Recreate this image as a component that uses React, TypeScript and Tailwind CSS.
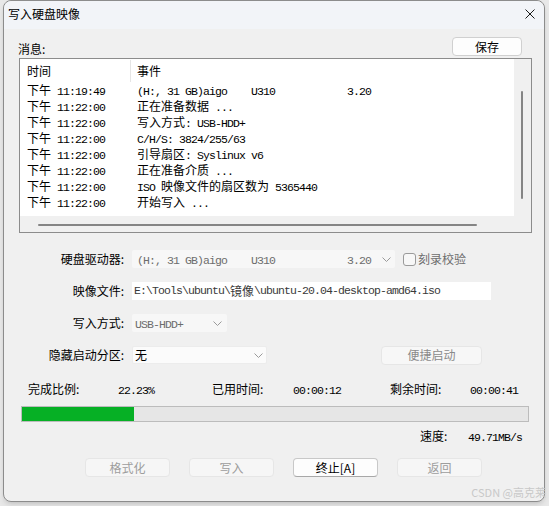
import React from "react";

const CJK = /([\u2e80-\u9fff\u3000-\u303f\uff00-\uffef]+)/;

function Mixed({ text }: { text: string }) {
  return (
    <>
      {text.split(CJK).map((part, i) =>
        part === "" ? null : CJK.test(part) ? (
          <span key={i} className="font-['Noto_Sans_CJK_SC'] text-[12px] tracking-normal">
            {part}
          </span>
        ) : (
          <span key={i} className="font-['Liberation_Mono'] text-[11.5px] tracking-[-0.9px]">
            {part}
          </span>
        )
      )}
    </>
  );
}

const rows = [
  ["下午 11:19:49", "(H:, 31 GB)aigo    U310            3.20"],
  ["下午 11:22:00", "正在准备数据 ..."],
  ["下午 11:22:00", "写入方式: USB-HDD+"],
  ["下午 11:22:00", "C/H/S: 3824/255/63"],
  ["下午 11:22:00", "引导扇区: Syslinux v6"],
  ["下午 11:22:00", "正在准备介质 ..."],
  ["下午 11:22:00", "ISO 映像文件的扇区数为 5365440"],
  ["下午 11:22:00", "开始写入 ..."],
];

function Chevron() {
  return (
    <svg width="9" height="5" viewBox="0 0 9 5" className="shrink-0">
      <polyline points="0.5,0.5 4.5,4.5 8.5,0.5" fill="none" stroke="#9a9a9a" strokeWidth="1" />
    </svg>
  );
}

function FieldLabel({ children }: { children: React.ReactNode }) {
  return <div className="w-[105px] shrink-0 text-right text-[12px] leading-[18px] text-black">{children}</div>;
}

const percent = 22.23;

export default function App() {
  return (
    <div className="relative h-[506px] w-[549px] overflow-hidden bg-[#e8e8e8] font-['Noto_Sans_CJK_SC',sans-serif]">
      <div className="ml-[3px] flex h-[502px] w-[542px] flex-col rounded-[8px] border border-[#8c8c8c] bg-[#f0f0f0] shadow-md">
        {/* title bar */}
        <div className="flex h-[28px] shrink-0 items-center justify-between rounded-t-[8px] bg-[#f2f4f8] pb-[3px] pl-[4px] pr-[9px]">
          <span className="text-[12px] leading-none text-black">写入硬盘映像</span>
          <svg width="10" height="10" viewBox="0 0 10 10">
            <path d="M0.5 0.5 L9.5 9.5 M9.5 0.5 L0.5 9.5" stroke="#1a1a1a" strokeWidth="1" fill="none" />
          </svg>
        </div>

        <div className="flex flex-col pl-[15px] pr-[12px]">
          {/* message header */}
          <div className="mt-[8px] flex h-[19px] items-start justify-between">
            <span className="-ml-[1px] mt-[6px] text-[12px] leading-[12px] text-black">消息:</span>
            <button className="mr-[10px] h-[19px] w-[70px] rounded-[4px] border border-[#d0d0d0] bg-[#fdfdfd] text-[12px] leading-none text-black">
              保存
            </button>
          </div>

          {/* log list */}
          <div className="mt-[2px] flex h-[175px] w-[513px] flex-col border border-[#8c8c8c] bg-[#f0f0f0]">
            <div className="flex h-[157px]">
              <div className="flex flex-1 flex-col bg-white">
                <div className="flex h-[23px] items-center text-[12px] text-black">
                  <span className="w-[110px] pl-[7px]">时间</span>
                  <span className="h-[22px] w-px bg-[#e5e5e5]" />
                  <span className="pl-[6px]">事件</span>
                </div>
                {rows.map(([time, event], i) => (
                  <div key={i} className="flex h-[16px] items-center whitespace-pre leading-[16px] text-black">
                    <span className="w-[117px] pl-[7px]">
                      <Mixed text={time} />
                    </span>
                    <span>
                      <Mixed text={event} />
                    </span>
                  </div>
                ))}
              </div>
              <div className="w-[17px] shrink-0 pl-[7px] pt-[32px]">
                <div className="h-[108px] w-[2px] rounded-full bg-[#858585]" />
              </div>
            </div>
            <div className="h-[16px] pl-[18px] pt-[8px]">
              <div className="h-[2px] w-[439px] rounded-full bg-[#858585]" />
            </div>
          </div>

          {/* form */}
          <div className="mt-[17px] flex flex-col gap-[14px]">
            <div className="flex h-[18px] items-center">
              <FieldLabel>硬盘驱动器:</FieldLabel>
              <div className="ml-[8px] flex h-[18px] w-[263px] items-center justify-between rounded-[2px] bg-[#f7f7f7] pl-[5px] pr-[4px] whitespace-pre leading-[18px] text-[#6d6d6d]">
                <span>
                  <Mixed text="(H:, 31 GB)aigo    U310            3.20" />
                </span>
                <Chevron />
              </div>
              <div className="ml-[8px] h-[13px] w-[13px] rounded-[3px] border border-[#9a9a9a] bg-[#f7f7f7]" />
              <span className="ml-[2px] text-[12px] leading-[18px] text-[#6d6d6d]">刻录校验</span>
            </div>

            <div className="flex h-[18px] items-center">
              <FieldLabel>映像文件:</FieldLabel>
              <div className="ml-[8px] flex h-[18px] w-[359px] items-center bg-white pl-[2px] whitespace-pre leading-[18px] text-[#3a3a3a]">
                <Mixed text="E:\Tools\ubuntu\镜像\ubuntu-20.04-desktop-amd64.iso" />
              </div>
            </div>

            <div className="flex h-[18px] items-center">
              <FieldLabel>写入方式:</FieldLabel>
              <div className="ml-[8px] flex h-[18px] w-[95px] items-center justify-between rounded-[2px] bg-[#f7f7f7] pl-[3px] pr-[5px] leading-[18px] text-[#6d6d6d]">
                <span>
                  <Mixed text="USB-HDD+" />
                </span>
                <Chevron />
              </div>
            </div>

            <div className="flex h-[18px] items-center">
              <FieldLabel>隐藏启动分区:</FieldLabel>
              <div className="ml-[8px] flex h-[18px] w-[135px] items-center justify-between rounded-[2px] border border-[#ececec] bg-[#fbfbfb] pl-[2px] pr-[3px] text-[12px] leading-[16px] text-black">
                <span>无</span>
                <Chevron />
              </div>
              <button className="ml-[114px] h-[19px] w-[101px] rounded-[4px] border border-[#e6e6e6] bg-[#f7f7f7] text-[12px] leading-none text-[#8a8a8a]">
                便捷启动
              </button>
            </div>
          </div>

          {/* progress */}
          <div className="ml-[9px] mt-[17px] flex h-[16px] items-center leading-[16px] text-black">
            <span className="w-[90px] text-[12px]">完成比例:</span>
            <span className="w-[94px]">
              <Mixed text="22.23%" />
            </span>
            <span className="w-[81px] text-[12px]">已用时间:</span>
            <span className="w-[97px]">
              <Mixed text="00:00:12" />
            </span>
            <span className="w-[80px] text-[12px]">剩余时间:</span>
            <span>
              <Mixed text="00:00:41" />
            </span>
          </div>

          <div className="ml-[2px] mt-[9px] h-[16px] w-[508px] border border-[#bcbcbc] bg-[#e6e6e6]">
            <div className="h-full bg-[#06b025]" style={{ width: `${percent}%` }} />
          </div>

          <div className="mt-[6px] flex h-[16px] items-center justify-end pr-[10px] leading-[16px] text-black">
            <span className="w-[48px] text-[12px]">速度:</span>
            <span>
              <Mixed text="49.71MB/s" />
            </span>
          </div>

          {/* buttons */}
          <div className="ml-[66px] mt-[14px] flex gap-[19px]">
            <button className="h-[19px] w-[85px] rounded-[4px] border border-[#e6e6e6] bg-[#f6f6f6] text-[12px] leading-none text-[#9d9d9d]">
              格式化
            </button>
            <button className="h-[19px] w-[85px] rounded-[4px] border border-[#e6e6e6] bg-[#f6f6f6] text-[12px] leading-none text-[#9d9d9d]">
              写入
            </button>
            <button className="h-[19px] w-[85px] rounded-[4px] border border-[#c8c8c8] border-b-[#a8a8a8] bg-[#fdfdfd] text-[12px] leading-none text-black">
              终止[A]
            </button>
            <button className="h-[19px] w-[85px] rounded-[4px] border border-[#e6e6e6] bg-[#f6f6f6] text-[12px] leading-none text-[#9d9d9d]">
              返回
            </button>
          </div>
        </div>
      </div>

      <span className="absolute bottom-[8px] right-[3px] text-[11px] leading-none text-[#c8c8c8]">CSDN @高克莱</span>
    </div>
  );
}
